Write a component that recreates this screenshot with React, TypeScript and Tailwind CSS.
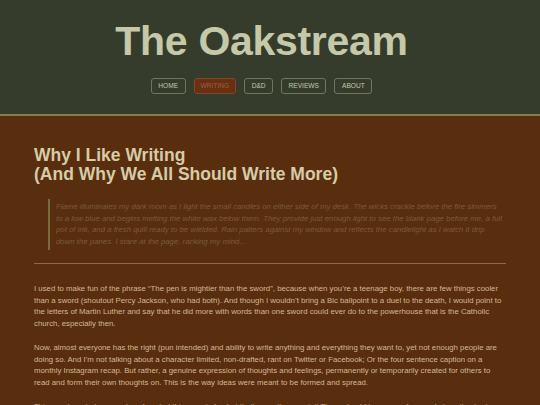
import React from "react";

const navItems = ["HOME", "WRITING", "D&D", "REVIEWS", "ABOUT"];

export default function App() {
  return (
    <div
      className="min-h-[405px] w-full bg-[#582e0f]"
      style={{ fontFamily: '"Liberation Sans", Arial, sans-serif' }}
    >
      <header className="h-[116px] border-b-2 border-[#8a7a52] bg-[#353c2b] pr-[17px] flex flex-col items-center">
        <h1 className="mt-[21px] text-[41px] leading-[41px] font-bold text-[#c6c8aa] tracking-[-0.3px]">
          The Oakstream
        </h1>
        <nav className="mt-[16px] flex gap-[8px]">
          {navItems.map((item) => (
            <a
              key={item}
              className={
                item === "WRITING"
                  ? "h-[16px] px-[6px] flex items-center rounded-[3px] border border-[#7a4a2a] bg-[#6a2e10] text-[6.6px] text-[#8c6648]"
                  : "h-[16px] px-[6.5px] flex items-center rounded-[3px] border border-[#6f775f] text-[6.6px] text-[#c6c8aa]"
              }
            >
              {item}
            </a>
          ))}
        </nav>
      </header>
      <main className="pl-[34px] pr-[32px]">
        <h2 className="mt-[30px] text-[17.5px] leading-[18.5px] font-bold text-[#d6cca7]">
          Why I Like Writing
          <br />
          (And Why We All Should Write More)
        </h2>
        <blockquote className="mt-[16px] ml-[14px] border-l-2 border-[#7b6b3b] pl-[6px] pr-[6px] py-[2px] italic text-[7.8px] leading-[11.67px] text-[#7c5b39]">
          Flame illuminates my dark room as I light the small candles on either side of my desk. The wicks crackle before the fire simmers to a low blue and begins melting the white wax below them. They provide just enough light to see the blank page before me, a full pot of ink, and a fresh quill ready to be wielded. Rain patters against my window and reflects the candlelight as I watch it drip down the panes. I stare at the page, racking my mind…
        </blockquote>
        <hr className="mt-[13px] mr-[2px] border-0 h-px bg-[#8c6b3c]" />
        <div className="mt-[19px] text-[7.8px] leading-[11.85px] text-[#d4b894] flex flex-col gap-[11.6px]">
          <p>
            I used to make fun of the phrase “The pen is mightier than the sword”, because when you’re a teenage boy, there are few things cooler than a sword (shoutout Percy Jackson, who had both). And though I wouldn’t bring a Bic ballpoint to a duel to the death, I would point to the letters of Martin Luther and say that he did more with words than one sword could ever do to the powerhouse that is the Catholic church, especially then.
          </p>
          <p>
            Now, almost everyone has the right (pun intended) and ability to write anything and everything they want to, yet not enough people are doing so. And I’m not talking about a character limited, non-drafted, rant on Twitter or Facebook; Or the four sentence caption on a monthly Instagram recap. But rather, a genuine expression of thoughts and feelings, permanently or temporarily created for others to read and form their own thoughts on. This is the way ideas were meant to be formed and spread.
          </p>
          <p>
            This may be a tad overzealous for what this page is for, but that’s exactly my point! There should be spaces for people to write short stories, poems, essays, and whatever else they want to share with the world.
          </p>
        </div>
      </main>
    </div>
  );
}
